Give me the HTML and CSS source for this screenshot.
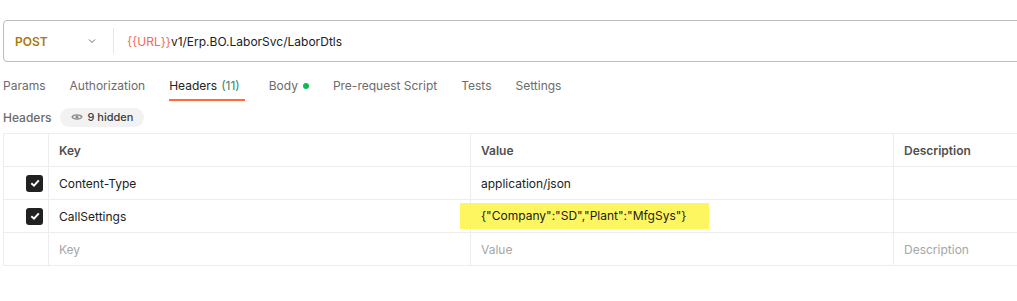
FILE: index.html
```html
<!DOCTYPE html>
<html lang="en">
  <head>
    <meta charset="UTF-8" />
    <title>Request</title>
    <link rel="stylesheet" href="styles.css">
  </head>
  <body>
    <!-- URL bar -->
    <div class="url-bar">
      <div class="method">
        <span class="method-name">POST</span>
        <svg class="chevron" width="10" height="10" viewBox="0 0 10 10">
          <path d="M2 3.5 L5 6.5 L8 3.5" fill="none" stroke="#6b6b6b" stroke-width="1"/>
        </svg>
      </div>
      <div class="url-text"><span class="var">{{URL}}</span>v1/Erp.BO.LaborSvc/LaborDtls</div>
    </div>

    <!-- Tabs -->
    <div class="tabs">
      <span class="tab">Params</span>
      <span class="tab">Authorization</span>
      <span class="tab active">Headers <span class="count">(11)</span></span>
      <span class="tab">Body <span class="dot"></span></span>
      <span class="tab">Pre-request Script</span>
      <span class="tab">Tests</span>
      <span class="tab">Settings</span>
    </div>

    <div class="sub-head">
      <span class="sub-title">Headers</span>
      <span class="hidden-pill">
        <svg width="12" height="12" viewBox="0 0 12 12">
          <path d="M1 6 C2.5 3.2 9.5 3.2 11 6 C9.5 8.8 2.5 8.8 1 6 Z" fill="none" stroke="#8a8a8a" stroke-width="1.2"/>
          <circle cx="6" cy="6" r="1.6" fill="#8a8a8a"/>
        </svg>
        9 hidden
      </span>
    </div>

    <!-- Headers table -->
    <div class="table">
      <div class="row head">
        <div class="cell check"></div>
        <div class="cell key">Key</div>
        <div class="cell value">Value</div>
        <div class="cell desc">Description</div>
      </div>
      <div class="row">
        <div class="cell check"><span class="box">
          <svg width="12" height="12" viewBox="0 0 12 12"><path d="M2.3 6.2 L5 8.7 L9.8 3.4" fill="none" stroke="#fff" stroke-width="2"/></svg>
        </span></div>
        <div class="cell key">Content-Type</div>
        <div class="cell value">application/json</div>
        <div class="cell desc"></div>
      </div>
      <div class="row">
        <div class="cell check"><span class="box">
          <svg width="12" height="12" viewBox="0 0 12 12"><path d="M2.3 6.2 L5 8.7 L9.8 3.4" fill="none" stroke="#fff" stroke-width="2"/></svg>
        </span></div>
        <div class="cell key">CallSettings</div>
        <div class="cell value"><span class="mark">{"Company":"SD","Plant":"MfgSys"}</span></div>
        <div class="cell desc"></div>
      </div>
      <div class="row placeholder">
        <div class="cell check"></div>
        <div class="cell key">Key</div>
        <div class="cell value">Value</div>
        <div class="cell desc">Description</div>
      </div>
    </div>
  </body>
</html>
```

FILE: styles.css
```css
/* base */
* {
  margin: 0;
  padding: 0;
  box-sizing: border-box;
}
body {
  width: 1060px;
  padding: 20px 0 0 3px;
  font-family: Inter, "Noto Sans", sans-serif;
  font-size: 12px;
  color: #212121;
  background: #ffffff;
}

/* url bar */
.url-bar {
  display: flex;
  align-items: center;
  height: 42px;
  border: 1px solid #bcbcbc;
  border-radius: 4px;
}
.method {
  display: flex;
  align-items: center;
  justify-content: space-between;
  width: 110px;
  height: 26px;
  padding: 0 16px 0 11px;
  border-right: 1px solid #e6e6e6;
}
.method-name {
  font-weight: 600;
  color: #ad7a03;
}
.url-text {
  padding-left: 13px;
}
.url-text .var {
  color: #f06a5a;
}

/* tabs */
.tabs {
  display: flex;
  gap: 24px;
  height: 39px;
  padding-top: 16px;
}
.tab {
  height: 23px;
  color: #6b6b6b;
  display: flex;
  gap: 4px;
}
.tab.active {
  color: #212121;
  border-bottom: 2px solid #ff6c37;
  padding-right: 5px;
}
.tab .count {
  color: #39836b;
}
.dot {
  width: 6px;
  height: 6px;
  margin-top: 5px;
  margin-left: 1px;
  border-radius: 50%;
  background: #0cbb52;
}

/* header sub row */
.sub-head {
  display: flex;
  align-items: center;
  gap: 8px;
  height: 32px;
}
.sub-title {
  font-weight: 500;
  color: #6b6b6b;
}
.hidden-pill {
  display: flex;
  align-items: center;
  gap: 5px;
  height: 19px;
  padding: 0 11px;
  border-radius: 10px;
  background: #f2f2f2;
  color: #3c3c3c;
  font-size: 11px;
  font-weight: 500;
}

/* table */
.table {
  border-top: 1px solid #ededed;
  border-left: 1px solid #ededed;
}
.row {
  display: flex;
  height: 33px;
  border-bottom: 1px solid #ededed;
}
.cell {
  display: flex;
  flex-shrink: 0;
  align-items: center;
  padding: 0 10px;
  border-right: 1px solid #ededed;
}
.check {
  width: 45px;
  justify-content: flex-end;
  padding: 0 5px 0 0;
}
.key { width: 422px; }
.value { width: 423px; }
.desc { width: 150px; border-right: none; }
.head .cell {
  font-weight: 600;
  color: #505050;
}
.placeholder .cell {
  color: #a6a6a6;
}
.box {
  display: flex;
  align-items: center;
  justify-content: center;
  width: 17px;
  height: 17px;
  border-radius: 3px;
  background: #212121;
}
.mark {
  background: #fdf660;
  margin-left: -21px;
  padding: 5px 23px 6px 21px;
}
```
